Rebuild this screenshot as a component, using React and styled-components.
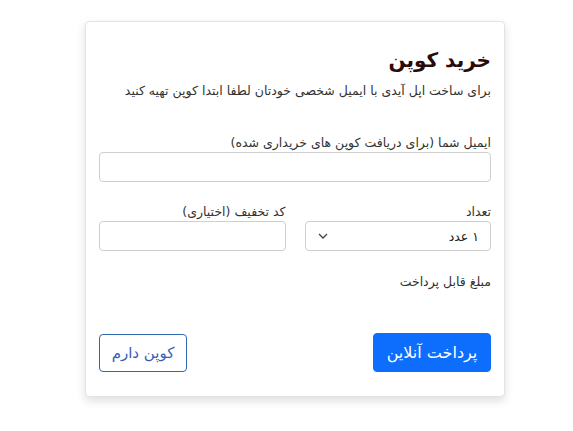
import React from "react";
import styled, { createGlobalStyle } from "styled-components";

const Global = createGlobalStyle`
  html, body { margin: 0; padding: 0; background: #fff; }
  body { font-family: "DejaVu Sans", "Noto Sans", sans-serif; }
  * { box-sizing: border-box; }
`;

const Page = styled.div`
  width: 573px;
  height: 431px;
  padding-top: 21px;
  padding-left: 85px;
`;

const Card = styled.div`
  direction: rtl;
  width: 420px;
  height: 376px;
  background: #fff;
  border: 1px solid #e3e3e3;
  border-radius: 4px;
  box-shadow: 0 4px 10px rgba(0, 0, 0, 0.13);
  padding: 23px 13px 0 13px;
  display: flex;
  flex-direction: column;
`;

const Title = styled.h2`
  margin: 0;
  font-size: 20px;
  font-weight: bold;
  color: #2b0a0a;
  line-height: 30px;
`;

const Sub = styled.p`
  margin: 6px 0 0;
  font-size: 12.5px;
  color: #333;
  line-height: 20px;
`;

const Field = styled.div`
  display: flex;
  flex-direction: column;
  gap: 0;
`;

const Label = styled.label`
  font-size: 12.5px;
  color: #333;
  line-height: 18px;
`;

const Input = styled.div`
  height: 30px;
  border: 1px solid #cfcfcf;
  border-radius: 4px;
  background: #fff;
  display: flex;
  align-items: center;
  justify-content: space-between;
  padding: 0 11px 0 12px;
  font-size: 12.5px;
  color: #222;
`;

const Row = styled.div`
  display: grid;
  grid-template-columns: 1fr 1fr;
  gap: 19px;
`;

const Buttons = styled.div`
  display: flex;
  justify-content: space-between;
  align-items: center;
`;

const Btn = styled.button`
  font-family: inherit;
  white-space: nowrap;
  height: ${(p) => (p.$primary ? "39px" : "38px")};
  padding: 0;
  font-size: ${(p) => (p.$primary ? "16px" : "15px")};
  border-radius: 4px;
  border: 1px solid ${(p) => (p.$primary ? "#0d6efd" : "#3068b0")};
  background: ${(p) => (p.$primary ? "#0d6efd" : "#fff")};
  color: ${(p) => (p.$primary ? "#fff" : "#3a5bb5")};
  width: ${(p) => (p.$primary ? "118px" : "88px")};
`;

const Spacer = styled.div`
  height: ${(p) => p.$h}px;
  flex-shrink: 0;
`;

const Chevron = () => (
  <svg width="10" height="6" viewBox="0 0 10 6">
    <path d="M1 1l4 4 4-4" fill="none" stroke="#444" strokeWidth="1.3" />
  </svg>
);

export default function App() {
  return (
    <>
      <Global />
      <Page>
        <Card>
          <Title>خرید کوپن</Title>
          <Sub>برای ساخت اپل آیدی با ایمیل شخصی خودتان لطفا ابتدا کوپن تهیه کنید</Sub>
          <Spacer $h={33} />
          <Field>
            <Label>ایمیل شما (برای دریافت کوپن های خریداری شده)</Label>
            <Input />
          </Field>
          <Spacer $h={21} />
          <Row>
            <Field>
              <Label>تعداد</Label>
              <Input>
                <span>۱ عدد</span>
                <Chevron />
              </Input>
            </Field>
            <Field>
              <Label>کد تخفیف (اختیاری)</Label>
              <Input />
            </Field>
          </Row>
          <Spacer $h={22} />
          <Label>مبلغ قابل پرداخت</Label>
          <Spacer $h={42} />
          <Buttons>
            <Btn $primary>پرداخت آنلاین</Btn>
            <Btn>کوپن دارم</Btn>
          </Buttons>
        </Card>
      </Page>
    </>
  );
}
